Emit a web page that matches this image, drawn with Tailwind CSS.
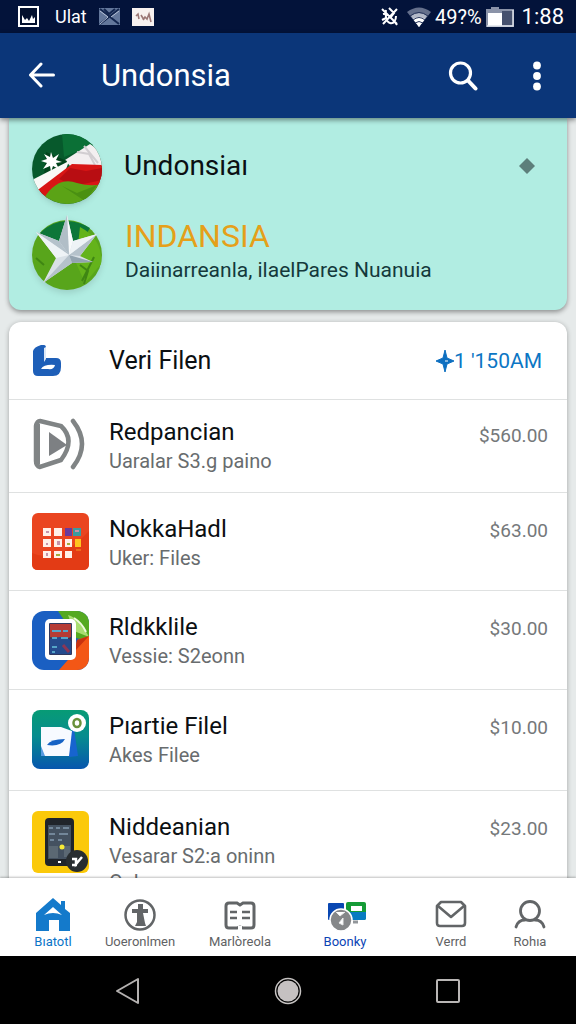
<!DOCTYPE html>
<html lang="en">
<head>
  <meta charset="UTF-8">
  <meta name="viewport" content="width=device-width, initial-scale=1.0">
  <title>Undonsia</title>
  <script src="https://cdn.jsdelivr.net/npm/@tailwindcss/browser@4"></script>
</head>
<body class="flex flex-col h-screen bg-[#e6eaea] font-['Roboto','Liberation_Sans',sans-serif] text-[#0b0f12]">

  <!-- Status bar -->
  <div class="flex items-center justify-between h-[33px] shrink-0 pl-[18px] pr-3 bg-[#03133a] text-white text-xl leading-6">
    <div class="flex items-center gap-2">
      <svg class="w-[21px] h-[21px]" viewBox="0 0 21 21">
        <rect x="1" y="1" width="19" height="19" fill="#03102e" stroke="#fff" stroke-width="2"/>
        <path d="M4 17V9l3 5 2-2 2 3 3-6 1 4 2-2v6z" fill="#fff"/>
      </svg>
      <span class="w-10 pl-2 text-lg">Ulat</span>
      <svg class="w-[21px] h-[17px] ml-1" viewBox="0 0 21 17">
        <rect width="21" height="17" fill="#63779b"/>
        <path d="M1 1l19 15M20 1L1 16M5 1l5 5 6-5" fill="none" stroke="#13264f" stroke-width="2"/>
        <path d="M1 3l8 6-8 7M20 3l-8 6" fill="none" stroke="#b5c1d6" stroke-width="1"/>
      </svg>
      <svg class="w-[22px] h-[18px] ml-1" viewBox="0 0 22 18">
        <rect width="22" height="18" fill="#f7f1ef"/>
        <path d="M4 8l2-2 1 5M9 7l3 5M11 12l2-3 2 2 2-5 2 8" fill="none" stroke="#9b7775" stroke-width="1.6"/>
      </svg>
    </div>
    <div class="flex items-center gap-1">
      <svg class="w-[18px] h-[21px] mr-1" viewBox="0 0 18 21" fill="none" stroke="#fff" stroke-width="2">
        <path d="M1 3l15 15M2 18L16 3M5 4c-1 5 0 12 4 13s6-3 6-7M8 2l5 5-3 4M2 8l4-1M13 15l3 4M1 14l4-2"/>
      </svg>
      <svg class="w-6 h-5" viewBox="0 0 24 20">
        <path d="M0 5Q12-4 24 5L12 20z" fill="#65708c"/>
        <path d="M4 9q8-6 16 0l-8 11z" fill="#b3b9c8"/>
        <path d="M6 12q6-4 12 0l-6 8z" fill="#fff"/>
        <path d="M3 9q9-7 18 0M6 13q6-5 12 0M8 16q4-3 8 0" fill="none" stroke="#26345b" stroke-width="1"/>
      </svg>
      <span>49?%</span>
      <svg class="w-7 h-5" viewBox="0 0 28 20">
        <path d="M0 2h5V0h8v2h15v18H0z" fill="#8b93a8"/>
        <path d="M2 6h14v13H2z" fill="#fff"/>
        <path d="M16 4h11v14H16z" fill="#46516e"/>
        <path d="M1 19h26V3" fill="none" stroke="#dfe3ea" stroke-width="1.5"/>
      </svg>
      <span class="ml-1 text-[22px]">1:88</span>
    </div>
  </div>

  <!-- App bar -->
  <header class="relative z-10 flex items-center h-[85px] shrink-0 pl-7 pr-6 bg-[#0b3679] text-white shadow-[0_2px_5px_rgba(0,0,0,0.45)]">
    <button type="button" aria-label="Back">
      <svg class="w-7 h-7" viewBox="0 0 28 28" fill="none" stroke="#fff" stroke-width="3" stroke-linecap="round" stroke-linejoin="round">
        <path d="M25.500 13H2.500M13 2L2.500 13 13 24"/>
      </svg>
    </button>
    <h1 class="ml-[45px] text-[31px] leading-9">Undonsia</h1>
    <button type="button" aria-label="Search" class="ml-auto">
      <svg class="w-[30px] h-[30px]" viewBox="0 0 30 30" fill="none" stroke="#fff" stroke-linecap="round">
        <circle cx="12.500" cy="12" r="10" stroke-width="3.200"/>
        <path d="M20 19.500l7.500 8" stroke-width="4"/>
      </svg>
    </button>
    <button type="button" aria-label="More options" class="ml-11">
      <svg class="w-[30px] h-[30px]" viewBox="0 0 30 30" fill="#fff">
        <circle cx="15" cy="4.500" r="3.900"/><circle cx="15" cy="15" r="3.900"/><circle cx="15" cy="25.500" r="3.900"/>
      </svg>
    </button>
  </header>

  <main class="flex-1 min-h-0 overflow-hidden px-[9px]">

    <!-- Country card -->
    <section class="h-48 pt-4 pl-[23px] pr-8 rounded-b-xl bg-[#b1ede2] shadow-[0_2px_5px_rgba(0,0,0,0.4)]">
      <div class="flex h-[70px]">
        <svg class="w-[70px] h-[70px] shrink-0 rounded-full shadow-md" viewBox="0 0 70 70">
          <rect width="70" height="70" fill="#07592c"/>
          <path d="M30 0h30l2 11-30 12z" fill="#0b7036"/>
          <path d="M33 26L58 10l12 8v14H38z" fill="#f3eff0"/>
          <path d="M45 18l12 2 6 11M52 12l14 17" stroke="#d2ced1" stroke-width="2" fill="none"/>
          <path d="M14 18l21 9-5 11-18 3z" fill="#03441d"/>
          <path d="M0 46l37-19-4 11L4 60z" fill="#f8f8f6"/>
          <path d="M3 58L40 30l30 1v22L10 65z" fill="#d81515"/>
          <path d="M38 34l16 3 16-3v12l-28 6-15-7z" fill="#b80d12"/>
          <path d="M12 64q14-22 33-15 14 4 25 1v20H16z" fill="#5ba316"/>
          <path d="M30 52l15 7 20-8-12 16z" fill="#4a9012"/>
          <path d="M19 18l2 6 6-4-3 6 6 2-6 1 3 6-6-3-2 6-1-6-7 3 4-6-6-2 6-2-3-5 6 3z" fill="#fff"/>
        </svg>
        <h2 class="ml-[22px] text-[28px] leading-[64px]">Undonsiaı</h2>
        <svg class="w-4 h-4 ml-auto mt-6" viewBox="0 0 16 16"><path d="M8 0l8 8-8 8-8-8z" fill="#5d7f7b"/></svg>
      </div>
      <div class="flex pt-[11px]">
        <svg class="w-[70px] h-[78px] shrink-0 overflow-visible drop-shadow-md" viewBox="0 0 70 78">
          <circle cx="35" cy="40" r="35" fill="#58a51b"/>
          <path d="M8 18Q30-3 58 13L38 46z" fill="#0d7639"/>
          <path d="M48 12q23 12 21 37L53 68l-9-20z" fill="#64b31b"/>
          <path d="M48 50l8 6-4 13M12 50l-8-7M62 42l-12 24" fill="none" stroke="#3f8613" stroke-width="2"/>
          <path d="M35 0l6 26 24-7-17 22 13 6-21 1-29 20 13-25L4 17l23 9z" fill="#d9e1e7"/>
          <path d="M35 0l6 26-4 14z" fill="#f8fafb"/>
          <path d="M35 0l-8 26 10 14z" fill="#b1bec7"/>
          <path d="M4 17l23 9 10 14zM65 19L48 41l-11-1zM11 68l29-20-3-8z" fill="#b5c2cb"/>
          <path d="M4 17l20 26 13-3zM65 19l-24 7-4 14z" fill="#eef3f6"/>
          <path d="M61 47l-21 1-3-8z" fill="#93a4b0"/>
        </svg>
        <div class="ml-[23px] pt-[3px]">
          <p class="text-[32px] leading-9 text-[#e5a01a]">INDANSIA</p>
          <p class="text-[21px] leading-8 text-[#14393b] whitespace-nowrap">Daiinarreanla, ilaelPares Nuanuia</p>
        </div>
      </div>
    </section>

    <!-- File list -->
    <section class="mt-3 rounded-t-xl bg-white shadow-[0_1px_5px_rgba(0,0,0,0.3)]">
      <div class="flex items-center h-[77px] pl-6 pr-[25px]">
        <svg class="w-7 h-8 shrink-0" viewBox="0 0 28 32">
          <path d="M0 6Q1 2 8 0h3q2 0 2 3v10h10q5 0 5 5v4q0 9-8 9H5q-5 0-5-5z" fill="#1e5fb8"/>
          <path d="M11 3l2-1v12l-2 3z" fill="#dce8f7"/>
          <path d="M8 24q3-5 14-4-1 5-7 4z" fill="#fff"/>
        </svg>
        <h3 class="ml-12 text-[25px] leading-8">Veri Filen</h3>
        <div class="flex items-center ml-auto text-[21px] leading-8 text-[#0c76c4]">
          <svg class="w-[18px] h-[22px]" viewBox="0 0 18 22"><path d="M9 0l2 8 7 3-7 3-2 8-2-8-7-3 7-3z" fill="#0d6fc0" stroke="#0d6fc0"/><path d="M9 11h3" stroke="#fff"/></svg>
          <span>1 '150AM</span>
        </div>
      </div>

      <div class="flex h-[93px] pt-4 pl-[23px] pr-[19px] border-t border-[#dfe1e1]">
        <svg class="w-[53px] h-[57px] shrink-0" viewBox="0 0 53 57" fill="none" stroke="#808485">
          <path d="M8 5l21 5q15 14 0 34L8 51q-4-1-4-6V10q1-5 4-5z" stroke-width="4.500"/>
          <path d="M5 8v40" stroke-width="6"/>
          <path d="M17 16l18 13-18 11z" fill="#7d8083" stroke="none"/>
          <path d="M41 5q18 23 0 46" stroke-width="4.500" stroke-linecap="round"/>
        </svg>
        <div class="ml-6">
          <h3 class="text-2xl leading-8">Redpancian</h3>
          <p class="text-xl leading-[26px] text-[#686c6e]">Uaralar S3.g paino</p>
        </div>
        <span class="ml-auto pt-2 text-[19px] leading-6 text-[#75787a]">$560.00</span>
      </div>

      <div class="flex h-[98px] pt-5 pl-[23px] pr-[19px] border-t border-[#dfe1e1]">
        <svg class="w-[57px] h-[57px] shrink-0" viewBox="0 0 57 57">
          <rect width="57" height="57" rx="6" fill="#ea4520"/>
          <path d="M0 40q25 12 57-22v33q0 6-6 6H6q-6 0-6-6z" fill="#e33b15"/>
          <g fill="#fff0e8">
            <path d="M11 15h8v8h-8zM22 15h8v8h-8zM11 26h8v8h-8zM22 26h8v8h-8zM33 26h7v8h-7zM11 38h8v7h-8zM22 38h8v7h-8zM33 38h7v7h-7z"/>
          </g>
          <path d="M33 15h7v8h-7z" fill="#6a3a9c"/><path d="M41 15h8v8h-8z" fill="#3b9a9f"/>
          <path d="M43 26h6v8h-6z" fill="#ffc41f"/>
          <path d="M14 18h3v2h-3zM14 30h2v2h-2zM25 28h3v4h-3zM14 40h2v3h-2zM43 17h4v2h-4z" fill="#c493aa"/>
          <path d="M24 41h4v2h-4zM35 30h3v2h-3z" fill="#a5ab3b"/>
          <path d="M44 37h5" stroke="#f59a24"/>
        </svg>
        <div class="ml-5">
          <h3 class="text-2xl leading-8">NokkaHadl</h3>
          <p class="text-xl leading-[26px] text-[#686c6e]">Uker: Files</p>
        </div>
        <span class="ml-auto pt-[6px] text-[19px] leading-6 text-[#75787a]">$63.00</span>
      </div>

      <div class="flex h-[99px] pt-5 pl-[23px] pr-[19px] border-t border-[#dfe1e1]">
        <svg class="w-[57px] h-[59px] shrink-0 rounded-xl" viewBox="0 0 57 59">
          <rect width="57" height="59" fill="#1a5fc2"/>
          <path d="M26 0h31v30L44 27z" fill="#55a921"/>
          <path d="M36 4q11 3 21 22l-15-6z" fill="#a9dd71"/><path d="M42 7q8 5 12 14" stroke="#f0f9df" stroke-width="2" fill="none"/>
          <path d="M57 25v34H27l16-18 2-12z" fill="#f35716"/>
          <path d="M57 25L43 40l2-11z" fill="#c9320f"/>
          <rect x="13" y="8" width="31" height="41" rx="5" fill="#fff"/>
          <rect x="17" y="12" width="23" height="32" rx="1" fill="#30395f"/>
          <path d="M18 13h21v13q-7 4-21 0z" fill="#b63b35"/>
          <path d="M18 28q14-5 21 2v13H18z" fill="#254b8d"/>
          <path d="M20 20h9M31 20h5M20 27h5M29 27h7M20 36h5M20 41h3" stroke="#55a4c8" stroke-width="2"/>
          <path d="M31 34l6 7" stroke="#8d3655" stroke-width="3"/>
        </svg>
        <div class="ml-5">
          <h3 class="text-2xl leading-8">Rldkklile</h3>
          <p class="text-xl leading-[26px] text-[#686c6e]">Vessie: S2eonn</p>
        </div>
        <span class="ml-auto pt-[6px] text-[19px] leading-6 text-[#75787a]">$30.00</span>
      </div>

      <div class="flex h-[101px] pt-5 pl-[23px] pr-[19px] border-t border-[#dfe1e1]">
        <svg class="w-[57px] h-[59px] shrink-0" viewBox="0 0 57 59">
          <defs>
            <linearGradient id="teal" x1="0" y1="0" x2="0" y2="1"><stop offset="0" stop-color="#079b75"/><stop offset=".45" stop-color="#078c8f"/><stop offset="1" stop-color="#0756ae"/></linearGradient>
          </defs>
          <rect width="57" height="59" rx="8" fill="url(#teal)"/>
          <path d="M36 24l6-5 4 27-9 1z" fill="#1764cf"/>
          <path d="M9 17h20l11 4-3 25H9z" fill="#f7faff"/>
          <path d="M9 36l4 10H9z" fill="#569ae0"/>
          <path d="M15 35q3-6 18-6-4 8-18 6z" fill="#1663c5"/>
          <circle cx="45" cy="13" r="9" fill="#fff"/>
          <ellipse cx="45" cy="13" rx="3.500" ry="4" fill="#fff" stroke="#69913b" stroke-width="2.500"/>
        </svg>
        <div class="ml-5">
          <h3 class="text-2xl leading-8">Pıartie Filel</h3>
          <p class="text-xl leading-[26px] text-[#686c6e]">Akes Filee</p>
        </div>
        <span class="ml-auto pt-[6px] text-[19px] leading-6 text-[#75787a]">$10.00</span>
      </div>

      <div class="flex h-[99px] pt-5 pl-[23px] pr-[19px] border-t border-[#dfe1e1]">
        <svg class="w-[57px] h-[62px] shrink-0" viewBox="0 0 57 62">
          <rect width="57" height="62" rx="6" fill="#fbc90a"/>
          <rect x="13" y="7" width="29" height="48" rx="4" fill="#20242a"/>
          <rect x="16" y="14" width="23" height="34" fill="#445160"/>
          <path d="M17 17h4M24 17h4M31 17h6M17 23h6M27 23h9M18 29h4M26 29h4" stroke="#73879a" stroke-width="2"/>
          <path d="M17 35h9v12h-9zM32 35h6v11h-6z" fill="#5b6873"/>
          <circle cx="30" cy="36" r="2.500" fill="#f8eb36"/><path d="M26 51h3" stroke="#fff" stroke-width="2"/>
          <circle cx="45" cy="50" r="11" fill="#282d30"/>
          <path d="M40 48h4v5l6-7M40 54h5" fill="none" stroke="#fff" stroke-width="2.500"/>
        </svg>
        <div class="ml-5">
          <h3 class="text-2xl leading-8">Niddeanian</h3>
          <p class="text-xl leading-[26px] text-[#686c6e]">Vesarar S2:a oninn<br>Oulua</p>
        </div>
        <span class="ml-auto pt-[6px] text-[19px] leading-6 text-[#75787a]">$23.00</span>
      </div>
    </section>
  </main>

  <!-- Bottom tabs -->
  <nav class="relative z-10 grid grid-cols-[90fr_84fr_116fr_94fr_118fr_40fr] h-[78px] shrink-0 pt-5 pl-2 pr-[26px] bg-white text-[13px] leading-4 text-[#5f6264] shadow-[0_-1px_2px_rgba(0,0,0,0.25)]">
    <a href="#" class="flex flex-col items-center gap-[2px] text-[#0b74c7]">
      <svg class="w-9 h-[34px]" viewBox="0 0 36 34">
        <path d="M1 15L18 0l8 7V3h4v8l5 4v18H24V22H14v11H1z" fill="#147acb"/>
        <path d="M9 17l9-8 9 8q-9-4-18 0z" fill="#fff"/>
        <path d="M15 23h7v10h-7z" fill="#fff"/>
      </svg>
      Bıatotl
    </a>
    <a href="#" class="flex flex-col items-center gap-[2px]">
      <svg class="w-8 h-[34px]" viewBox="0 0 32 34">
        <circle cx="16" cy="17" r="14.500" fill="none" stroke="#626567" stroke-width="2.500"/>
        <path d="M14 6h5v5h5v4h-5l2 10 1 3H11l2-4V15H8v-4h6z" fill="#626567"/>
      </svg>
      Uoeronlmen
    </a>
    <a href="#" class="flex flex-col items-center gap-[2px]">
      <svg class="w-8 h-[34px]" viewBox="0 0 32 34" fill="none" stroke="#626567">
        <path d="M13 30H5q-3 0-3-3V8q0-3 3-3h8l3 2 3-2h8q3 0 3 3v19q0 3-3 3h-8l-3-1z" stroke-width="3"/>
        <path d="M6 14h7M18 14h8M6 20h7M18 20h8" stroke-width="2.500"/>
        <path d="M16 28v4" stroke="#fff" stroke-width="4"/>
      </svg>
      Marlòreola
    </a>
    <a href="#" class="flex flex-col items-center gap-[2px] text-[#0b43b5]">
      <svg class="w-[38px] h-[34px] ml-1" viewBox="0 0 38 34">
        <rect y="5" width="16" height="17" rx="1" fill="#0947b2"/>
        <rect x="18" y="4" width="20" height="18" rx="2" fill="#149b36"/>
        <path d="M18 14h20v6q0 2-2 2H18z" fill="#087bc0"/>
        <path d="M23 8h11v5H23z" fill="#fff"/>
        <circle cx="13" cy="22" r="11" fill="#858789" stroke="#fff" stroke-width="1.500"/>
        <path d="M8 14l4 4 5-4M15 20l-4 5 4 2z" fill="#fff" stroke="#e9eaea" stroke-width="1"/>
        <path d="M25 24h5" stroke="#92969a" stroke-width="3"/>
      </svg>
      Boonky
    </a>
    <a href="#" class="flex flex-col items-center gap-[2px]">
      <svg class="w-8 h-[34px]" viewBox="0 0 32 34" fill="none" stroke="#626567" stroke-width="2.600" stroke-linejoin="round">
        <path d="M6 4h20l4 4v17q0 3-3 3H5q-3 0-3-3V8z"/>
        <path d="M3 8l13 11L29 8"/>
      </svg>
      Verrd
    </a>
    <a href="#" class="flex flex-col items-center gap-[2px]">
      <svg class="w-8 h-[34px]" viewBox="0 0 32 34" fill="none" stroke="#626567" stroke-width="2.800" stroke-linecap="round">
        <circle cx="16" cy="13" r="9.500"/>
        <path d="M2 29q2-7 9-7M30 29q-2-7-9-7"/>
      </svg>
      Rohıa
    </a>
  </nav>

  <!-- System navigation -->
  <div class="relative z-10 grid grid-cols-3 items-center justify-items-center h-[68px] shrink-0 px-12 pt-[2px] bg-black">
    <button type="button" aria-label="System back">
      <svg class="w-7 h-7" viewBox="0 0 28 28"><path d="M24 2v24L3 14z" fill="none" stroke="#b4b1b0" stroke-width="2" stroke-linejoin="round"/></svg>
    </button>
    <button type="button" aria-label="Home">
      <svg class="w-7 h-7" viewBox="0 0 28 28"><circle cx="14" cy="14" r="12.500" fill="none" stroke="#c5c2c1" stroke-width="1.500"/><circle cx="14" cy="14" r="10.500" fill="#c5c1c1"/></svg>
    </button>
    <button type="button" aria-label="Recent apps">
      <svg class="w-7 h-7" viewBox="0 0 28 28"><rect x="3" y="3" width="22" height="22" rx="1" fill="none" stroke="#b9b6b5" stroke-width="2"/></svg>
    </button>
  </div>

</body>
</html>
